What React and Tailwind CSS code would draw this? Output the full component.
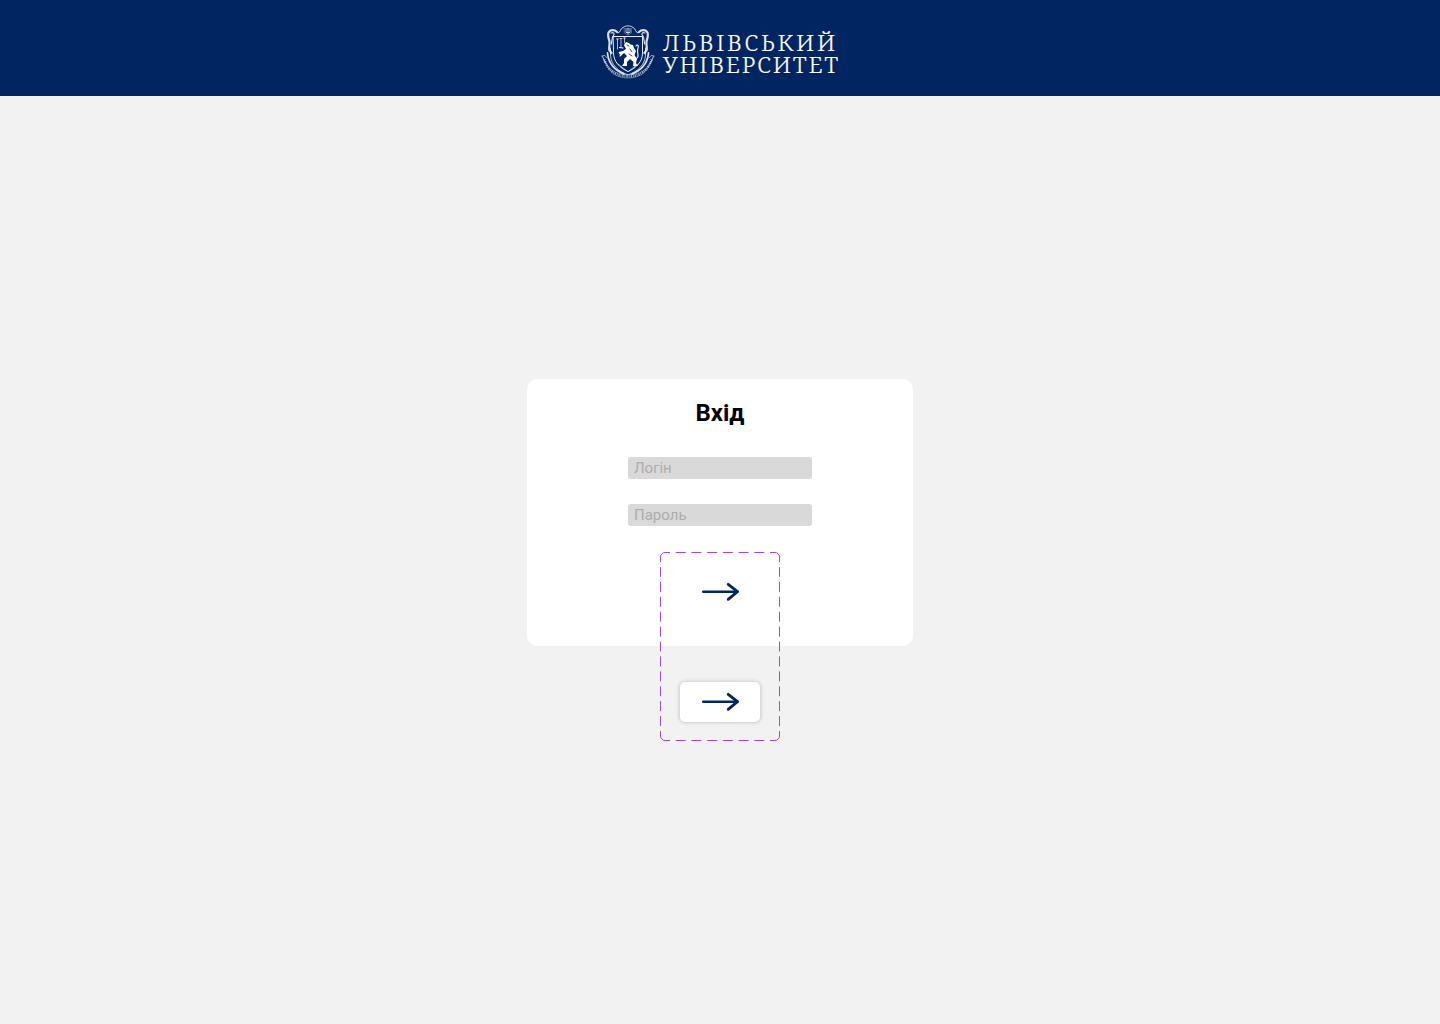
function Crest() {
  return (
    <svg className="h-16 w-16 shrink-0" viewBox="0 0 64 64" fill="none" stroke="#fff" strokeLinecap="round" strokeLinejoin="round">
      <g strokeWidth="1">
        <path d="M17.500 16.500H46.500V33C46.500 42 40 48 32 51.500C24 48 17.500 42 17.500 33Z" opacity=".9" />
        <path d="M14.500 28V35C15 45 22 51 32 55C42 51 49 45 49.500 35V28" opacity=".7" />
      </g>
      <g opacity=".85">
        <path d="M21 12C18.500 9.500 14 9.500 12.500 12.500C11.500 16 12.700 19 13.400 21C14 24 12.800 27 13.300 30L15.500 33" strokeWidth="2.200" />
        <path d="M43 12C45.500 9.500 50 9.500 51.500 12.500C52.500 16 51.300 19 50.600 21C50 24 51.200 27 50.700 30L48.500 33" strokeWidth="2.200" />
        <path d="M15 13C17.500 12 19 13.500 17.500 15.500C15.500 17.500 16 21 15.500 24M49 13C46.500 12 45 13.500 46.500 15.500C48.500 17.500 48 21 48.500 24" strokeWidth="1.200" />
        <path d="M11.500 33C12.500 43 18 50 28 54M52.500 33C51.500 43 46 50 36 54" strokeWidth="1.800" strokeDasharray="3 .8" />
      </g>
      <path d="M22 13C25 12.500 24 8.500 27 7.500C30 5.300 34 5.300 37 7.500C40 8.500 39 12.500 42 13" strokeWidth="1" opacity=".8" />
      <path d="M28.500 8.500H35.500V13L32 15L28.500 13Z" strokeWidth=".5" opacity=".6" />
      <path d="M30 9.500V12.500H34V9.500M32 8.500V14" strokeWidth=".8" opacity=".9" />
      <path d="M21.500 19V29M25 18.500V27M28.500 18V23M20.500 19H22.500M24 18.500H26M27.500 18H29.500" strokeWidth=".9" opacity=".75" />
      <path d="M28 25L30 22L33 23L34.500 24.500L37 25L38 28L40 31L38.500 35L41 39L40 43L42 46H37L37.500 42L34 39L31 42V46H26L28 43V39L31 36L28 33L24 35L22.500 32L27 31L30 29Z" fill="#fff" stroke="none" />
      <path d="M27 28L23.500 27.500M27 33L24 36M39 39C45 38 40 32 42 28C43 25 41.500 24 40 26" strokeWidth="1.100" />
      <path d="M31 25L33 26M34 29L36 32M33 34L36 36" stroke="#002561" strokeWidth=".8" />
      <path d="M6 36L9 35.500L11 38M58 36L55 35.500L53 38M6 36L9 42M58 36L55 42" strokeWidth=".8" opacity=".7" />
      <path d="M7 37C11 49 18 54.500 32 54.500S53 49 57 37M9 42C13 52 20 58 32 58S51 52 55 42" strokeWidth=".6" opacity=".6" />
      <path d="M8.200 39.500C12 50 19 56.300 32 56.300S52 50 55.800 39.500" strokeWidth="2.500" strokeLinecap="butt" strokeDasharray=".8 1 1.300 .9" opacity=".6" />
      <path d="M26 47L31 51M38 47L33 51M22 44L26 47M42 44L38 47" strokeWidth=".8" opacity=".7" />
    </svg>
  );
}

function Wordmark() {
  return (
    <svg className="h-16 w-[185px] shrink-0" viewBox="0 0 185 64" fill="#fff" stroke="#fff" strokeWidth=".2" fontFamily="'Noto Serif', 'PT Serif', 'Liberation Serif', serif" fontSize="21.400" fontWeight="300">
      <g transform="scale(1.08 1)">
        <text x="2.800" y="30.800" textLength="159.500" lengthAdjust="spacing">ЛЬВІВСЬКИЙ</text>
        <text x="2.600" y="53" textLength="162.500" lengthAdjust="spacing">УНІВЕРСИТЕТ</text>
      </g>
    </svg>
  );
}

function Arrow() {
  return (
    <svg className="h-5 w-10" viewBox="0 0 40 20" fill="none" stroke="#002561" strokeLinecap="round" strokeLinejoin="round">
      <path d="M3.200 9.700H37.500" strokeWidth="2.400" />
      <path d="M28.200 2.300L37.500 9.700L28.200 17.300" strokeWidth="2.800" />
    </svg>
  );
}

function DashedFrame() {
  return (
    <svg className="pointer-events-none absolute inset-0" width="120" height="189" fill="none" stroke="#9747ff">
      <path d="M5 .5H115M5 188.500H115" strokeDasharray="10 5.714" strokeDashoffset="5" />
      <path d="M.5 5V184M119.500 5V184" strokeDasharray="10 4.917" strokeDashoffset="5" />
      <path d="M.5 5A4.500 4.500 0 0 1 5 .5M115 .5A4.500 4.500 0 0 1 119.500 5M119.500 184A4.500 4.500 0 0 1 115 188.500M5 188.500A4.500 4.500 0 0 1 .5 184" />
    </svg>
  );
}

function Field({ label, type }) {
  return (
    <input
      type={type}
      aria-label={label}
      placeholder={label}
      className="block h-[22px] w-[184px] rounded-[3px] bg-[#d9d9d9] px-1.5 text-[15px] leading-[22px] placeholder:text-[#adadad] placeholder:opacity-100"
    />
  );
}

export default function App() {
  return (
    <div className="min-h-screen bg-[#f2f2f2] font-['Roboto',sans-serif]">
      <header className="flex h-24 justify-center bg-[#002561] pt-5">
        <div className="flex w-[248px]">
          <Crest />
          <Wordmark />
        </div>
      </header>
      <main className="flex justify-center pt-[283px]">
        <section className="flex h-[267px] w-[386px] flex-col items-center rounded-[10px] bg-white pt-5">
          <h1 className="text-2xl leading-7 font-bold text-black">Вхід</h1>
          <form className="flex flex-col items-center pt-[30px]">
            <div className="flex flex-col gap-[25px]">
              <Field label="Логін" type="text" />
              <Field label="Пароль" type="password" />
            </div>
            <div className="relative mt-[26px] flex h-[189px] w-[120px] shrink-0 flex-col items-center gap-[70px] pt-5">
              <DashedFrame />
              <button type="button" aria-label="Увійти" className="flex h-10 w-20 shrink-0 items-center justify-center rounded-[5px]">
                <Arrow />
              </button>
              <button type="button" aria-label="Увійти" className="flex h-10 w-20 shrink-0 items-center justify-center rounded-[5px] bg-white shadow-[0_0_4px_rgba(0,0,0,0.25)]">
                <Arrow />
              </button>
            </div>
          </form>
        </section>
      </main>
    </div>
  );
}
